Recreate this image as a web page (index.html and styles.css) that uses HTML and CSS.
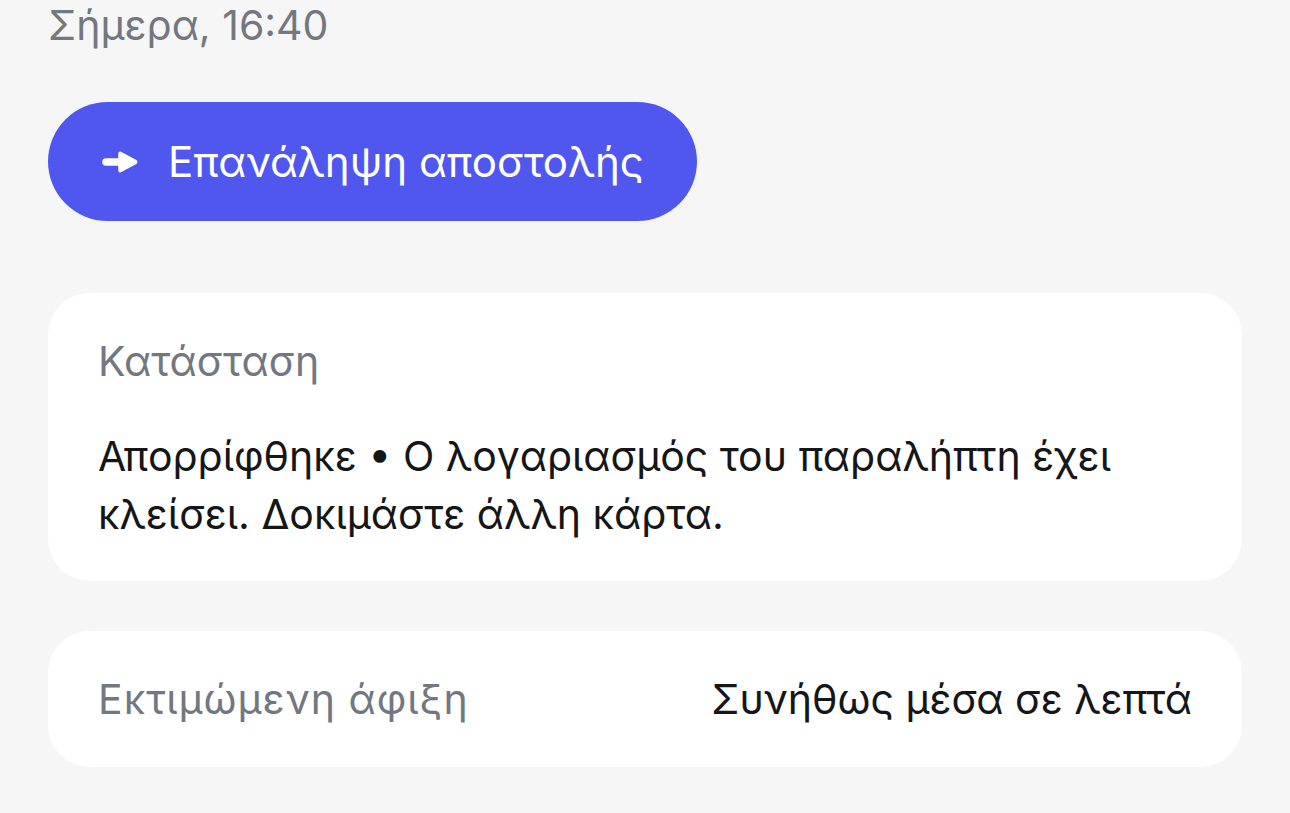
FILE: index.html
```html
<!DOCTYPE html>
<html lang="el">
<head>
<meta charset="utf-8">
<title>Αποστολή</title>
<link rel="stylesheet" href="styles.css">
</head>
<body>
<main class="page">
  <p class="date">Σήμερα, 16:40</p>
  <button class="retry" type="button">
    <svg class="retry-icon" width="36" height="24" viewBox="0 0 36 24" aria-hidden="true">
      <path d="M4 12 H20" fill="none" stroke="#fff" stroke-width="7.5" stroke-linecap="round"/>
      <path d="M17 4 Q17 1.5 19.5 2.8 L33.6 10.4 Q35.8 12 33.6 13.6 L19.5 21.2 Q17 22.5 17 20 Z" fill="#fff" stroke="#fff" stroke-width="1.5" stroke-linejoin="round"/>
    </svg>
    <span>Επανάληψη αποστολής</span>
  </button>
  <section class="card status">
    <h2 class="label">Κατάσταση</h2>
    <p class="status-text">Απορρίφθηκε • Ο λογαριασμός του παραλήπτη έχει κλείσει. Δοκιμάστε άλλη κάρτα.</p>
  </section>
  <section class="card eta">
    <span class="label eta-label">Εκτιμώμενη άφιξη</span>
    <span class="value">Συνήθως μέσα σε λεπτά</span>
  </section>
</main>
</body>
</html>
```

FILE: styles.css
```css
html, body {
  margin: 0;
  padding: 0;
  background: #f6f6f7;
}

body {
  font-family: Inter, "Noto Sans", sans-serif;
  font-size: 41px;
  color: #151618;
}

.page {
  display: flex;
  flex-direction: column;
  align-items: flex-start;
  padding: 1px 48px 0;
}

.date {
  margin: 0 0 53px;
  line-height: 48px;
  color: #737780;
}

.retry {
  display: flex;
  align-items: center;
  gap: 30px;
  height: 119px;
  padding: 0 53px 0 54px;
  border: none;
  border-radius: 60px;
  background: #4f57ef;
  color: #fff;
  font: inherit;
  font-size: 42px;
  line-height: 48px;
  margin-bottom: 72px;
}

.retry-icon {
  display: block;
  flex: none;
}

.card {
  align-self: stretch;
  background: #fff;
  border-radius: 42px;
}

.status {
  display: flex;
  flex-direction: column;
  padding: 39px 50px 38px;
  margin-bottom: 50px;
}

.label {
  margin: 0 0 37px;
  font-size: 41px;
  font-weight: 400;
  line-height: 58px;
  color: #737780;
}

.status-text {
  margin: 0;
  line-height: 58px;
}

.eta {
  display: flex;
  justify-content: space-between;
  align-items: center;
  height: 136px;
  padding: 0 50px;
  box-sizing: border-box;
  line-height: 58px;
}

.eta-label {
  margin: 0;
  letter-spacing: 1px;
}
```
